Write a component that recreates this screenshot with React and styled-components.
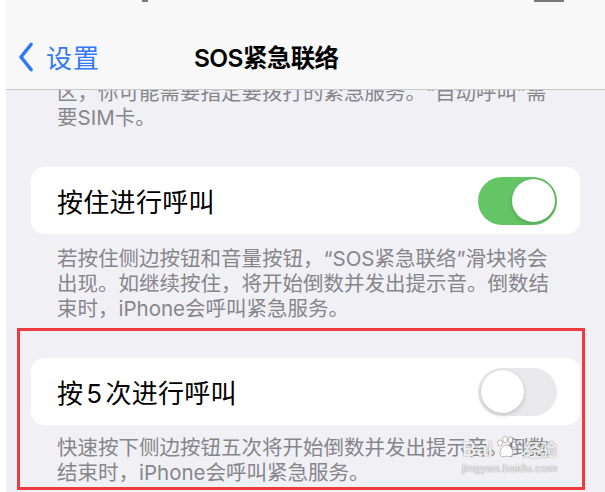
import React from "react";
import styled, { createGlobalStyle } from "styled-components";

const Global = createGlobalStyle`
  html, body { margin: 0; padding: 0; background: #ffffff; }
  body { font-family: "Inter", "Noto Sans CJK SC", sans-serif; }
  * { box-sizing: border-box; }
`;

const Page = styled.div`
  position: relative;
  width: 605px;
  height: 492px;
  overflow: hidden;
  padding-left: 6px;
  background: #ffffff;
`;

const Panel = styled.div`
  display: flex;
  flex-direction: column;
  height: 100%;
  background: #f1f0f5;
`;

const Nav = styled.header`
  position: relative;
  z-index: 2;
  flex: 0 0 90px;
  display: flex;
  align-items: center;
  padding: 24px 0 0 12px;
  background: #f8f8f8;
  border-bottom: 1px solid #c9c9cc;
`;

const StatusMark = styled.div`
  position: absolute;
  top: 0;
  left: ${(p) => p.$left}px;
  width: ${(p) => p.$w}px;
  height: 2px;
  background: #7a7a7a;
`;

const Back = styled.div`
  display: flex;
  align-items: center;
  gap: 12px;
  color: #3179f5;
  font-size: 26px;
  font-family: "Noto Sans CJK SC", sans-serif;
  letter-spacing: 1px;
`;

const Title = styled.h1`
  margin: 0 0 0 94px;
  font-size: 24.5px;
  font-weight: 600;
  color: #000;
  font-family: "Inter", "Noto Sans CJK SC", sans-serif;
  letter-spacing: -0.6px;
`;

const Scroll = styled.div`
  flex: 1;
  overflow: hidden;
`;

const Content = styled.div`
  margin-top: -10.5px;
  display: flex;
  flex-direction: column;
`;

const Footer = styled.p`
  margin: ${(p) => p.$top}px 0 0;
  padding-left: 51px;
  font-size: 20.5px;
  line-height: 25px;
  color: #86868b;
  white-space: nowrap;
`;

const Card = styled.div`
  margin: ${(p) => p.$top}px 0 0 25px;
  width: 549px;
  height: 67px;
  background: #ffffff;
  border-radius: 13px;
  display: flex;
  align-items: center;
  justify-content: space-between;
  padding: 0 23px 0 26px;
`;

const Label = styled.span`
  font-size: 26px;
  color: #000;
  letter-spacing: 0.3px;
`;

const Num = styled.span`
  margin: 0 3px;
`;

const Track = styled.div`
  width: 79px;
  height: 48px;
  border-radius: 24px;
  padding: 2.5px;
  display: flex;
  justify-content: ${(p) => (p.$on ? "flex-end" : "flex-start")};
  background: ${(p) => (p.$on ? "#65c466" : "#e9e9eb")};
`;

const Knob = styled.div`
  width: 43px;
  height: 43px;
  border-radius: 50%;
  background: #ffffff;
  box-shadow: 0 2px 5px rgba(0, 0, 0, 0.16), 0 0 1px rgba(0, 0, 0, 0.1);
`;

const Highlight = styled.div`
  position: absolute;
  left: 17px;
  top: 328px;
  width: 568px;
  height: 162px;
  border: 3px solid #ef3b3e;
  pointer-events: none;
  z-index: 3;
`;

const Watermark = styled.div`
  position: absolute;
  left: 462px;
  top: 436px;
  z-index: 4;
  display: flex;
  flex-direction: column;
  align-items: flex-start;
  color: rgba(255, 255, 255, 0.9);
  text-shadow: 0 0 1px rgba(0, 0, 0, 0.45), 0 0 2px rgba(0, 0, 0, 0.2);
  pointer-events: none;
`;

const WmTop = styled.div`
  display: flex;
  align-items: flex-end;
  gap: 2px;
  font-family: "Liberation Sans", sans-serif;
  font-weight: 700;
  font-size: 20px;
  line-height: 22px;
`;

const WmCn = styled.span`
  font-family: "Noto Sans CJK SC", sans-serif;
  font-weight: 700;
  font-size: 17px;
  margin-left: 4px;
`;

const WmUrl = styled.div`
  font-family: "Liberation Sans", sans-serif;
  font-size: 11px;
  letter-spacing: 0.4px;
  margin-top: 2px;
`;

const Toggle = ({ on }) => (
  <Track $on={on}>
    <Knob />
  </Track>
);

export default function App() {
  return (
    <>
      <Global />
      <Page>
        <Panel>
          <Nav>
            <StatusMark $left={528} $w={30} />
            <StatusMark $left={136} $w={6} />
            <Back>
              <svg width="16" height="30" viewBox="0 0 16 30">
                <path
                  d="M13 2.5 L3 15 L13 27.5"
                  fill="none"
                  stroke="#3179f5"
                  strokeWidth="3.6"
                  strokeLinecap="round"
                  strokeLinejoin="round"
                />
              </svg>
              <span>设置</span>
            </Back>
            <Title>SOS紧急联络</Title>
          </Nav>
          <Scroll>
            <Content>
              <Footer $top={0}>
                区，你可能需要指定要拨打的紧急服务。“自动呼叫”需
                <br />
                要SIM卡。
              </Footer>
              <Card $top={37.5}>
                <Label>按住进行呼叫</Label>
                <Toggle on />
              </Card>
              <Footer $top={11.5}>
                若按住侧边按钮和音量按钮，“SOS紧急联络”滑块将会
                <br />
                出现。如继续按住，将开始倒数并发出提示音。倒数结
                <br />
                束时，iPhone会呼叫紧急服务。
              </Footer>
              <Card $top={37.5}>
                <Label>
                  按<Num>5</Num>次进行呼叫
                </Label>
                <Toggle on={false} />
              </Card>
              <Footer $top={9.5}>
                快速按下侧边按钮五次将开始倒数并发出提示音。倒数
                <br />
                结束时，iPhone会呼叫紧急服务。
              </Footer>
            </Content>
          </Scroll>
        </Panel>
        <Highlight />
        <Watermark>
          <WmTop>
            <span>Bai</span>
            <svg width="22" height="22" viewBox="0 0 22 22" style={{ marginBottom: 2 }}>
              <g fill="rgba(255,255,255,0.9)" stroke="rgba(0,0,0,0.35)" strokeWidth="0.7">
                <ellipse cx="5" cy="7" rx="2.4" ry="3" />
                <ellipse cx="10" cy="3.5" rx="2.4" ry="3" />
                <ellipse cx="15.5" cy="4" rx="2.4" ry="3" />
                <ellipse cx="19" cy="9" rx="2.2" ry="2.8" />
                <path d="M5 18 C5 12 9 9 12 9 C15 9 18 13 18 17 C18 21 14 21 11.5 20 C9 21 5 21 5 18 Z" />
              </g>
            </svg>
            <WmCn>经验</WmCn>
          </WmTop>
          <WmUrl>jingyan.baidu.com</WmUrl>
        </Watermark>
      </Page>
    </>
  );
}
